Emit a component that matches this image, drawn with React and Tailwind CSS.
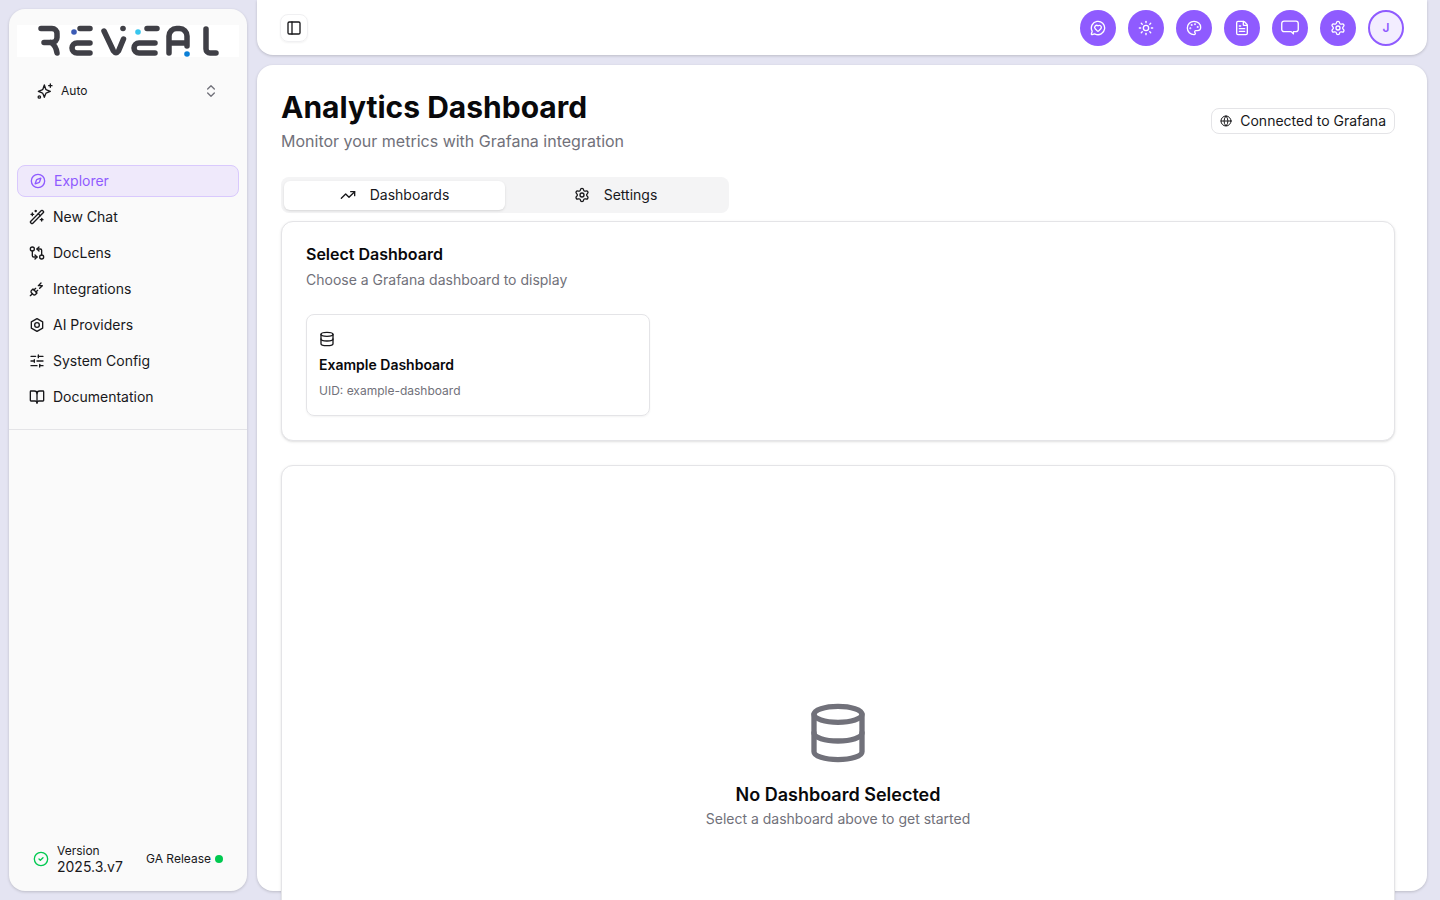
import {
  BookOpen,
  ChevronsUpDown,
  CircleCheck,
  Compass,
  Database,
  FileText,
  GitCompareArrows,
  Globe,
  MessageCircleHeart,
  PanelLeft,
  Palette,
  PlugZap,
  Settings,
  SlidersHorizontal,
  Sun,
  TrendingUp,
  WandSparkles,
} from "lucide-react";

function Logo() {
  return (
    <svg viewBox="0 0 222 32" className="block w-full h-8 bg-white" fill="none" stroke="#3f3f46" strokeWidth="5.500" strokeLinecap="round" strokeLinejoin="round">
      <path d="M24 3.500h11a5 5 0 0 1 5 5v4a5 5 0 0 1-5 5h-8M34 17.500q5 3 6 10.500" />
      <path d="M63 3.500h10M73 18H60a5 5 0 0 0 0 10h13" />
      <path d="M87 6l9.500 20q2.500 3.500 5 0l5-12" />
      <path d="M130 3.500h10M138 18h-16a5 5 0 0 0 0 10h16" />
      <path d="M152 28V11a7.500 7.500 0 0 1 7.500-7.500h3A7.500 7.500 0 0 1 170 11v10M152 18h18" />
      <path d="M189 4v20a4 4 0 0 0 4 4h6" />
      <circle cx="106" cy="3.500" r="2.800" fill="#3f3f46" stroke="none" />
      <circle cx="57" cy="7" r="2.800" fill="#3b5bb5" stroke="none" />
      <circle cx="121" cy="7" r="2.800" fill="#38c6ee" stroke="none" />
      <circle cx="170" cy="29" r="2.800" fill="#0b7fd6" stroke="none" />
    </svg>
  );
}

function SparkDots({ className }) {
  return (
    <svg viewBox="0 0 24 24" className={className} fill="none" stroke="currentColor" strokeWidth="2" strokeLinecap="round" strokeLinejoin="round">
      <path d="M11 3l2 6a2 2 0 0 0 1.300 1.300L20 12.500l-5.700 2.200A2 2 0 0 0 13 16l-2 5.500L9 16a2 2 0 0 0-1.300-1.300L2 12.500l5.700-2.200A2 2 0 0 0 9 9z" />
      <path d="M20 1.500v5M17.500 4h5" />
      <circle cx="3.500" cy="21" r="1.800" />
    </svg>
  );
}

function HexRing({ className }) {
  return (
    <svg viewBox="0 0 24 24" className={className} fill="none" stroke="currentColor" strokeWidth="2" strokeLinecap="round" strokeLinejoin="round">
      <path d="M12 2.500l8.500 4.800v9.400L12 21.500l-8.500-4.800V7.300z" />
      <circle cx="12" cy="12" r="3.500" />
    </svg>
  );
}

function WideChat({ className }) {
  return (
    <svg viewBox="0 0 24 20" className={className} fill="none" stroke="currentColor" strokeWidth="1.800" strokeLinecap="round" strokeLinejoin="round">
      <path d="M4 1.500h16a3 3 0 0 1 3 3v8a3 3 0 0 1-3 3h-3.500v3l-3-3H4a3 3 0 0 1-3-3v-8a3 3 0 0 1 3-3z" />
    </svg>
  );
}

const navItems = [
  { label: "New Chat", icon: WandSparkles },
  { label: "DocLens", icon: GitCompareArrows },
  { label: "Integrations", icon: PlugZap },
  { label: "AI Providers", icon: HexRing },
  { label: "System Config", icon: SlidersHorizontal },
  { label: "Documentation", icon: BookOpen },
];

const headerIcons = [
  { icon: MessageCircleHeart, size: "w-4 h-4" },
  { icon: Sun, size: "w-4 h-4" },
  { icon: Palette, size: "w-4 h-4" },
  { icon: FileText, size: "w-4 h-4" },
  { icon: WideChat, size: "w-[18px] h-[15px]" },
  { icon: Settings, size: "w-4 h-4" },
];

function Sidebar() {
  return (
    <aside className="w-[238px] shrink-0 my-[9px] bg-[#fafafa] rounded-2xl shadow-[0_1px_3px_rgba(0,0,0,0.18)] flex flex-col">
      <div className="px-2 pt-4">
        <Logo />
      </div>
      <div className="h-[36px] mt-4 mx-[28px] flex items-center justify-between text-[#18181b]">
        <div className="flex items-center gap-2">
          <SparkDots className="w-4 h-4" />
          <span className="text-xs">Auto</span>
        </div>
        <ChevronsUpDown className="w-4 h-4 text-[#71717a]" />
      </div>
      <nav className="mt-[56px] px-2 pb-4 border-b border-[#e4e4e7] flex flex-col gap-1">
        <div className="h-8 flex items-center gap-2 px-3 rounded-lg bg-[#efe9fb] border border-[#d9c9fd] text-[#8f5bff] text-sm">
          <Compass className="w-4 h-4" />
          <span>Explorer</span>
        </div>
        {navItems.map((item) => (
          <div key={item.label} className="h-8 flex items-center gap-2 px-3 text-[#18181b] text-sm">
            <item.icon className="w-4 h-4" />
            <span>{item.label}</span>
          </div>
        ))}
      </nav>
      <div className="mt-auto h-[64px] pl-6 pr-6 flex items-center justify-between text-[#18181b]">
        <div className="flex items-center gap-2">
          <CircleCheck className="w-4 h-4 text-[#00c950]" />
          <div className="flex flex-col">
            <span className="text-xs leading-4">Version</span>
            <span className="text-sm leading-4">2025.3.v7</span>
          </div>
        </div>
        <div className="flex items-center gap-1">
          <span className="text-xs">GA Release</span>
          <span className="w-2 h-2 rounded-full bg-[#00c950]" />
        </div>
      </div>
    </aside>
  );
}

function Header() {
  return (
    <header className="h-[55px] shrink-0 bg-white rounded-b-2xl shadow-[0_1px_3px_rgba(0,0,0,0.18)] flex items-center justify-between px-[23px]">
      <button className="w-7 h-7 rounded-lg border border-[#f0f0f2] shadow-xs flex items-center justify-center text-[#18181b]">
        <PanelLeft className="w-4 h-4" />
      </button>
      <div className="flex items-center gap-3">
        {headerIcons.map((item, i) => (
          <div key={i} className="w-9 h-9 rounded-full bg-[#8f5bff] flex items-center justify-center text-white">
            <item.icon className={item.size} />
          </div>
        ))}
        <div className="w-9 h-9 rounded-full bg-[#f3edff] border-2 border-[#8f5bff] flex items-center justify-center text-[#8f5bff] text-xs font-semibold">
          J
        </div>
      </div>
    </header>
  );
}

function Tabs() {
  return (
    <div className="w-[448px] h-9 mt-[24px] bg-[#f4f4f5] rounded-lg pl-[3px] pr-[3px] pt-1 pb-[3px] flex text-sm text-[#18181b]">
      <div className="flex-1 bg-white rounded-md shadow-sm flex items-center justify-center gap-[14px] pb-[1px]">
        <TrendingUp className="w-4 h-4" />
        <span>Dashboards</span>
      </div>
      <div className="flex-1 flex items-center justify-center gap-[14px] pb-[1px]">
        <Settings className="w-4 h-4" />
        <span>Settings</span>
      </div>
    </div>
  );
}

export default function App() {
  return (
    <div className="h-screen w-screen overflow-hidden bg-[#e4e4f2] flex gap-[10px] pl-[9px] pr-[13px] font-['Inter',sans-serif]">
      <Sidebar />
      <div className="flex-1 min-w-0 flex flex-col gap-[10px] pb-[9px]">
        <Header />
        <main className="flex-1 min-h-0 bg-white rounded-2xl shadow-[0_1px_3px_rgba(0,0,0,0.18)] pl-6 pr-8 pt-6">
          <div className="flex items-center justify-between">
            <div>
              <h1 className="text-3xl font-bold text-[#09090b] leading-9">Analytics Dashboard</h1>
              <p className="text-base text-[#71717a] leading-6 mt-[4px]">Monitor your metrics with Grafana integration</p>
            </div>
            <div className="h-[26px] px-2 rounded-lg border border-[#e4e4e7] flex items-center gap-2 text-sm text-[#18181b]">
              <Globe className="w-3 h-3" />
              <span>Connected to Grafana</span>
            </div>
          </div>
          <Tabs />
          <section className="h-[220px] mt-2 rounded-xl border border-[#e4e4e7] bg-white shadow-sm p-6">
            <h2 className="text-base font-semibold text-[#09090b] leading-4">Select Dashboard</h2>
            <p className="text-sm text-[#71717a] leading-5 mt-[8px]">Choose a Grafana dashboard to display</p>
            <div className="grid grid-cols-3 gap-4 mt-6">
              <div className="h-[102px] rounded-lg border border-[#e4e4e7] shadow-xs p-3">
                <Database className="w-4 h-4 text-[#18181b] mt-[4px]" />
                <p className="text-sm font-semibold text-[#09090b] leading-5 mt-[8px]">Example Dashboard</p>
                <p className="text-xs text-[#71717a] leading-4 mt-[8px]">UID: example-dashboard</p>
              </div>
            </div>
          </section>
          <section className="h-[600px] mt-6 rounded-xl border border-[#e4e4e7] bg-white shadow-sm flex flex-col items-center justify-center">
            <Database className="w-16 h-16 text-[#71717a]" />
            <h3 className="text-lg font-semibold text-[#09090b] leading-7 mt-4">No Dashboard Selected</h3>
            <p className="text-sm text-[#71717a] leading-5">Select a dashboard above to get started</p>
          </section>
        </main>
      </div>
    </div>
  );
}
